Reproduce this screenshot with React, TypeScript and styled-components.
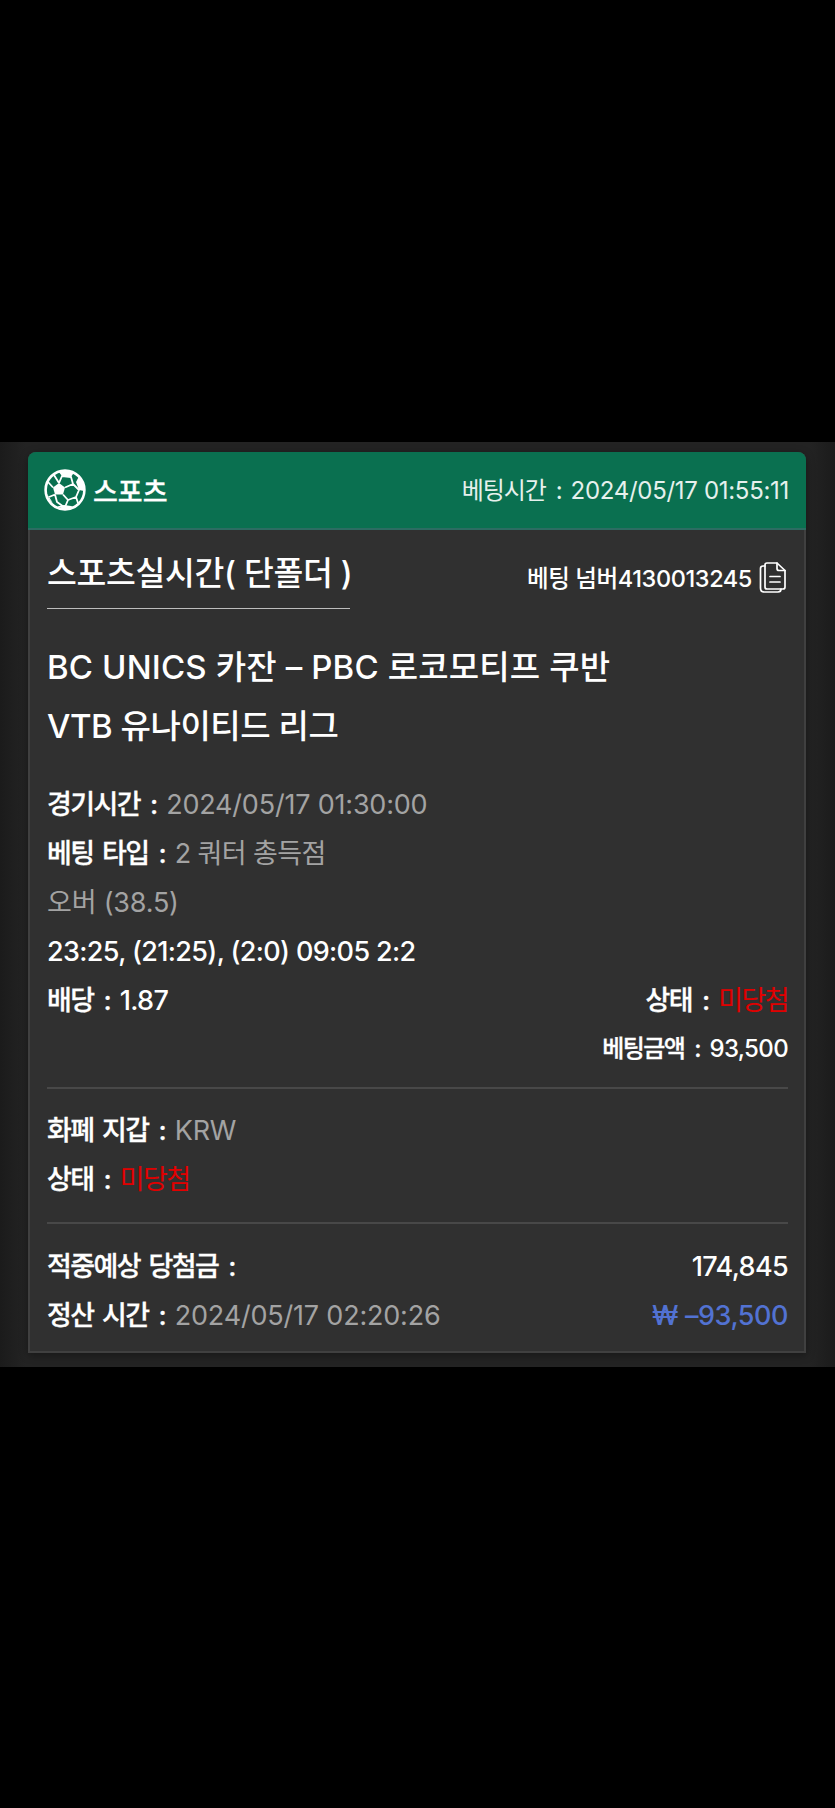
import React from "react";
import styled, { createGlobalStyle } from "styled-components";

const Global = createGlobalStyle`
  html, body { margin: 0; padding: 0; background: #000; }
  body { font-family: Inter, "Noto Sans CJK KR", "Liberation Sans", sans-serif; }
`;

const Screen = styled.div`
  width: 835px;
  height: 1808px;
  background: #000;
  padding-top: 442px;
  box-sizing: border-box;
`;

const Band = styled.section`
  height: 925px;
  box-sizing: border-box;
  padding: 10px 29px 0 28px;
  background: linear-gradient(90deg, #1b1b1b 0%, #232323 3%, #232323 97%, #1b1b1b 100%);
`;

const Card = styled.article`
  height: 901px;
  display: flex;
  flex-direction: column;
  background: #303030;
  border-radius: 8px 8px 0 0;
  box-shadow: 0 0 0 2px #404040 inset, 0 2px 8px rgba(0, 0, 0, 0.35);
`;

const Header = styled.header`
  height: 76px;
  flex: none;
  display: flex;
  align-items: center;
  justify-content: space-between;
  padding: 0 17px 0 16px;
  background: #0a7050;
  border-radius: 8px 8px 0 0;
  border-bottom: 2px solid #2c6c62;
  box-sizing: content-box;
`;

const Brand = styled.div`
  display: flex;
  align-items: center;
  gap: 7px;
`;

const BrandName = styled.span`
  color: #fff;
  font-size: 27px;
  font-weight: 500;
  letter-spacing: 0;
  -webkit-text-stroke: 0.3px #fff;
`;

const BetTime = styled.span`
  color: #e6f1ed;
  font-size: 24px;
  letter-spacing: -0.3px;
  margin-top: -4px;
  white-space: pre;
`;

const BetTimeLabel = styled.span`
  letter-spacing: -1.1px;
`;

const Body = styled.div`
  flex: 1;
  display: flex;
  flex-direction: column;
  padding: 0 18px 0 19px;
`;

const TitleRow = styled.div`
  display: flex;
  justify-content: space-between;
  align-items: center;
  height: 79px;
  flex: none;
`;

const Title = styled.h2`
  margin: 0;
  color: #fff;
  font-size: 32.4px;
  font-weight: 500;
  letter-spacing: -0.3px;
  line-height: 87px;
  border-bottom: 1px solid #bdbdbd;
  height: 78px;
  width: 303px;
  white-space: nowrap;
`;

const BetNumber = styled.div`
  display: flex;
  align-items: center;
  gap: 7px;
  margin-right: 1px;
  padding-top: 14px;
  color: #fff;
  font-size: 23.5px;
  font-weight: 500;
  letter-spacing: -0.4px;
`;

const Match = styled.h3`
  margin: 29px 0 0;
  color: #fff;
  font-size: 33px;
  font-weight: 500;
  line-height: 59px;
  white-space: nowrap;
`;

const MatchLine = styled.span<{ $spacing: number }>`
  display: block;
  letter-spacing: ${(p) => p.$spacing}px;
`;

const Details = styled.div`
  margin-top: 24px;
`;

const Row = styled.div<{ $end?: boolean; $small?: boolean }>`
  display: flex;
  justify-content: ${(p) => (p.$end ? "flex-end" : "flex-start")};
  font-size: ${(p) => (p.$small ? "24px" : "27px")};
  line-height: ${(p) => (p.$small ? "47px" : "49px")};
  height: 49px;
  color: #fff;
  white-space: nowrap;
`;

const SplitRow = styled(Row)`
  justify-content: space-between;
`;

const Label = styled.span`
  font-weight: 500;
  letter-spacing: -1.6px;
  word-spacing: 3px;
  -webkit-text-stroke: 0.3px #fff;
  white-space: pre;
`;

const Colon = styled.span`
  margin: 0 8px 0 10px;
  letter-spacing: 0;
`;

const Strong = styled.span`
  font-weight: 500;
  letter-spacing: -0.65px;
  white-space: pre;
`;

const Muted = styled.span`
  color: #a3a3a3;
  font-weight: 400;
  letter-spacing: -0.2px;
  white-space: pre;
`;

const MutedKr = styled(Muted)`
  letter-spacing: -0.6px;
`;

const Red = styled.span`
  color: #e10000;
  font-weight: 400;
  letter-spacing: -1.6px;
`;

const Blue = styled.span`
  color: #5272d2;
  font-weight: 500;
  letter-spacing: -0.45px;
`;

const Divider = styled.hr`
  margin: 0;
  border: none;
  height: 2px;
  background: #484848;
`;

const Section = styled.div<{ $top: number; $bottom: number }>`
  padding: ${(p) => p.$top}px 0 ${(p) => p.$bottom}px;
`;

const SoccerBall = () => (
  <svg width="42" height="42" viewBox="0 0 42 42" aria-hidden="true">
    <circle cx="21" cy="21" r="19.4" fill="none" stroke="#fff" strokeWidth="2.6" />
    <polygon points="15,14 21,18.5 19,25.5 11,25.5 9,18.5" fill="#fff" />
    <path
      d="M15 14 L18 7 L27 8 L29 15 L21 18.5 M29 15 L35 21 L32 28 L24 31 L19 25.5 M24 31 L21 38 M32 28 L34 34 M11 25.5 L13 33 L20 38 M11 25.5 L5 28 M9 18.5 L4 13 M15 14 L10 6"
      fill="none"
      stroke="#fff"
      strokeWidth="1.8"
      strokeLinejoin="round"
    />
    <polygon points="14,2 24,1.5 30,3.5 27,8 18,7" fill="#fff" />
    <polygon points="35,7.5 39.5,15 40,22 35,21 32,13" fill="#fff" />
    <polygon points="2.5,24 5,28 9,34 5.5,31" fill="#fff" />
    <polygon points="13,37.5 20,36 27,37 30,38 22,40.5" fill="#fff" />
  </svg>
);

const CopyIcon = () => (
  <svg width="28" height="32" viewBox="0 0 28 32" fill="none" stroke="#fff" strokeWidth="1.7" strokeLinejoin="round" strokeLinecap="round" aria-hidden="true">
    <path d="M8 2 H18 L26 9.5 V26 Q26 28 24 28 H8 Q6 28 6 26 V4 Q6 2 8 2 Z" />
    <path d="M18 2 V7.5 Q18 9.5 20 9.5 H26" />
    <path d="M6 5 H4 Q1.5 5 1.5 7.5 V27 Q1.5 31 5 31 H19 Q22 31 22 28" />
    <path d="M11 15.5 H21 M11 21 H21" />
  </svg>
);

export default function App() {
  return (
    <>
      <Global />
      <Screen>
        <Band>
          <Card>
            <Header>
              <Brand>
                <SoccerBall />
                <BrandName>스포츠</BrandName>
              </Brand>
              <BetTime>
                <BetTimeLabel>베팅시간</BetTimeLabel><Colon>:</Colon>2024/05/17 01:55:11
              </BetTime>
            </Header>
            <Body>
              <TitleRow>
                <Title>스포츠실시간( 단폴더 )</Title>
                <BetNumber>
                  베팅 넘버4130013245
                  <CopyIcon />
                </BetNumber>
              </TitleRow>
              <Match>
                <MatchLine $spacing={0.15}>BC UNICS 카잔 – PBC 로코모티프 쿠반</MatchLine>
                <MatchLine $spacing={-0.45}>VTB 유나이티드 리그</MatchLine>
              </Match>
              <Details>
                <Row>
                  <Label>경기시간<Colon>:</Colon></Label>
                  <Muted>2024/05/17 01:30:00</Muted>
                </Row>
                <Row>
                  <Label>베팅 타입<Colon>:</Colon></Label>
                  <MutedKr>2 쿼터 총득점</MutedKr>
                </Row>
                <Row>
                  <Muted>오버 (38.5)</Muted>
                </Row>
                <Row>
                  <Strong>23:25, (21:25), (2:0) 09:05 2:2</Strong>
                </Row>
                <SplitRow>
                  <span>
                    <Label>배당<Colon>:</Colon></Label>
                    <Strong>1.87</Strong>
                  </span>
                  <span>
                    <Label>상태<Colon>:</Colon></Label>
                    <Red>미당첨</Red>
                  </span>
                </SplitRow>
                <Row $end $small>
                  <Label>베팅금액<Colon>:</Colon></Label>
                  <Strong>93,500</Strong>
                </Row>
              </Details>
              <Section $top={13} $bottom={0}>
                <Divider />
              </Section>
              <Section $top={17} $bottom={18}>
                <Row>
                  <Label>화폐 지갑<Colon>:</Colon></Label>
                  <Muted>KRW</Muted>
                </Row>
                <Row>
                  <Label>상태<Colon>:</Colon></Label>
                  <Red>미당첨</Red>
                </Row>
              </Section>
              <Divider />
              <Section $top={18} $bottom={0}>
                <SplitRow>
                  <Label>적중예상 당첨금<Colon>:</Colon></Label>
                  <Strong>174,845</Strong>
                </SplitRow>
                <SplitRow>
                  <span>
                    <Label>정산 시간<Colon>:</Colon></Label>
                    <Muted>2024/05/17 02:20:26</Muted>
                  </span>
                  <Blue>₩ –93,500</Blue>
                </SplitRow>
              </Section>
            </Body>
          </Card>
        </Band>
      </Screen>
    </>
  );
}
